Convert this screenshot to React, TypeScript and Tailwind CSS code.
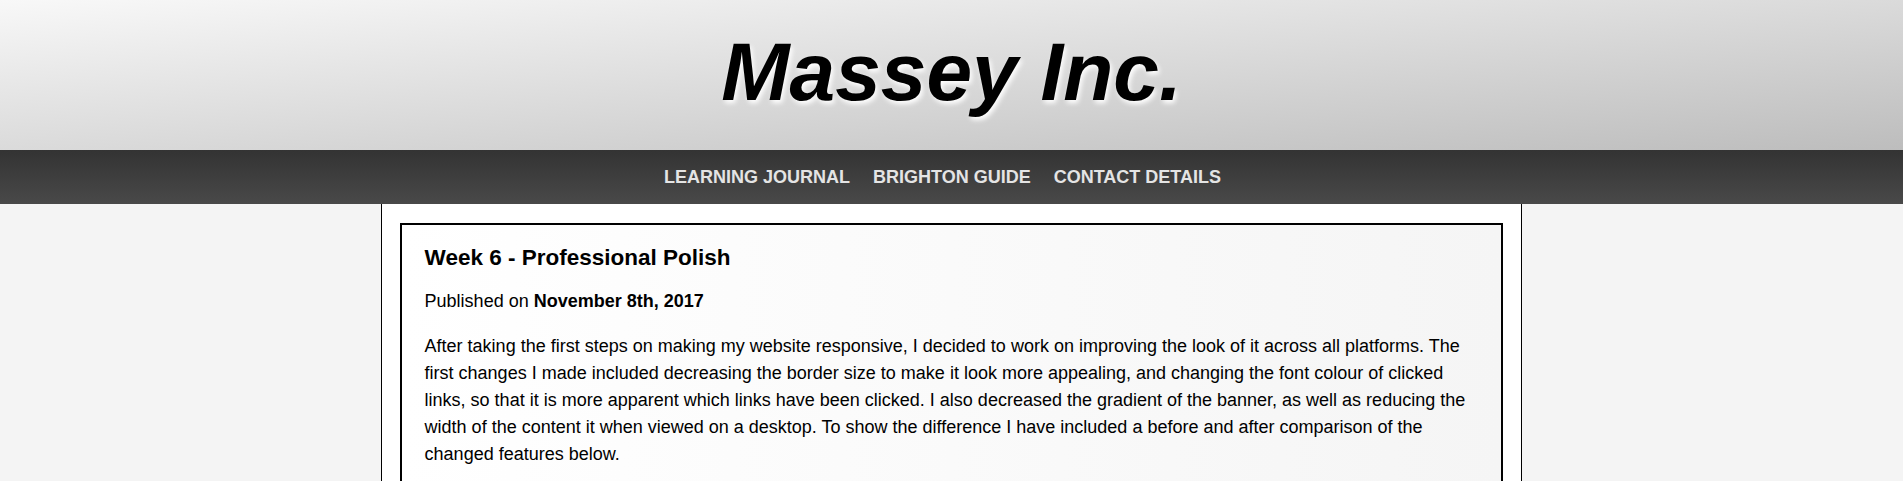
import React from "react";

export default function App() {
  const font = { fontFamily: '"Liberation Sans", Arial, sans-serif' };
  return (
    <div className="min-h-screen flex flex-col bg-[#f4f4f4] text-black" style={font}>
      <header className="h-[150px] bg-[linear-gradient(to_bottom_right,#f8f8f8,#bdbdbd)] flex justify-center pt-[24px]">
        <h1 className="text-[82px] leading-[96px] font-bold italic text-black [text-shadow:2px_3px_5px_#ffffff]">
          Massey Inc.
        </h1>
      </header>
      <nav className="h-[54px] bg-[linear-gradient(to_bottom,#333333,#494949)] flex items-center justify-center gap-[23px] pr-[18px]">
        <a className="text-[18px] font-bold text-[#e4e4e4] leading-none">LEARNING JOURNAL</a>
        <a className="text-[18px] font-bold text-[#e4e4e4] leading-none">BRIGHTON GUIDE</a>
        <a className="text-[18px] font-bold text-[#e4e4e4] leading-none">CONTACT DETAILS</a>
      </nav>
      <div className="flex-1 flex justify-center">
        <main className="w-[60%] bg-white border-x border-black px-[18px] pt-[19px] pb-[18px]">
          <article className="border-2 border-black bg-[linear-gradient(to_right,#ffffff,#f5f5f5)] px-[23px] pt-[20px] pb-[24px]">
            <h2 className="text-[22.5px] leading-[26px] font-bold">Week 6 - Professional Polish</h2>
            <p className="mt-[17px] text-[18px] leading-[27px]">
              Published on <b>November 8th, 2017</b>
            </p>
            <p className="mt-[18px] text-[18px] leading-[27px]">
              After taking the first steps on making my website responsive, I decided to work on improving the look of it across all platforms. The first changes I made included decreasing the border size to make it look more appealing, and changing the font colour of clicked links, so that it is more apparent which links have been clicked. I also decreased the gradient of the banner, as well as reducing the width of the content it when viewed on a desktop. To show the difference I have included a before and after comparison of the changed features below.
            </p>
          </article>
        </main>
      </div>
    </div>
  );
}
